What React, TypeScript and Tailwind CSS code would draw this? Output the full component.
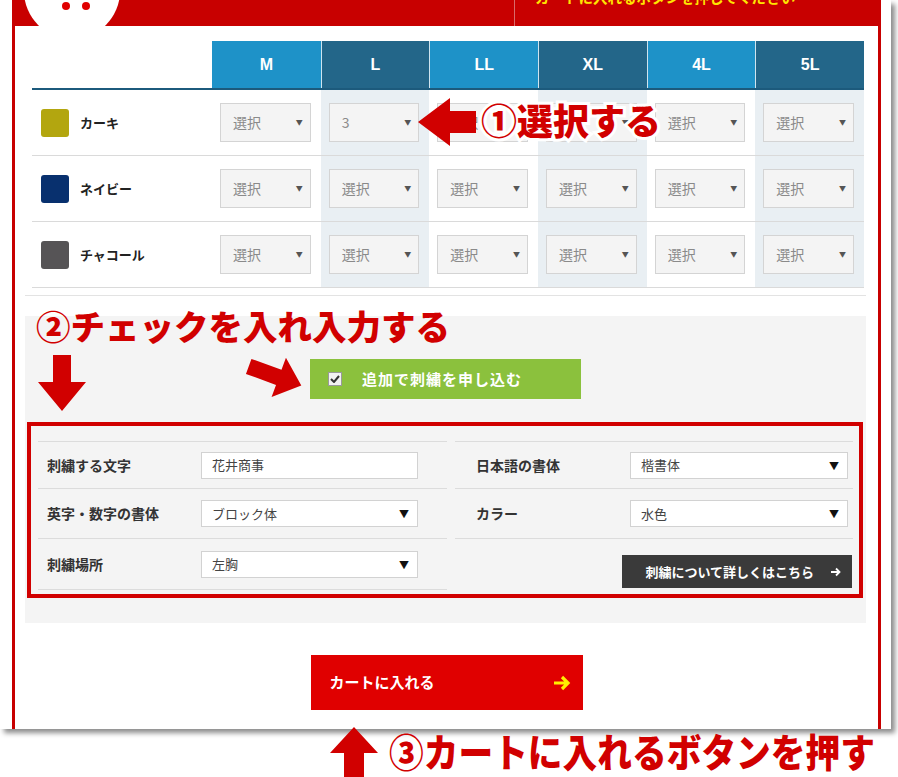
const sizes = [
  { label: 'M', dark: false },
  { label: 'L', dark: true },
  { label: 'LL', dark: false },
  { label: 'XL', dark: true },
  { label: '4L', dark: false },
  { label: '5L', dark: true },
];

const colors = [
  { name: 'カーキ', swatch: 'bg-[#b3a60f]', values: ['選択', '3', '選択', '選択', '選択', '選択'] },
  { name: 'ネイビー', swatch: 'bg-[#08306e]', values: ['選択', '選択', '選択', '選択', '選択', '選択'] },
  { name: 'チャコール', swatch: 'bg-[#565456]', values: ['選択', '選択', '選択', '選択', '選択', '選択'] },
];

const leftRows = [
  { label: '刺繍する文字', value: '花井商事', select: false, h: 'h-[47px]' },
  { label: '英字・数字の書体', value: 'ブロック体', select: true, h: 'h-[50px]' },
  { label: '刺繍場所', value: '左胸', select: true, h: 'h-[51px]' },
];

const rightRows = [
  { label: '日本語の書体', value: '楷書体', h: 'h-[47px]' },
  { label: 'カラー', value: '水色', h: 'h-[50px]' },
];

const SizeSelect = ({ value }: { value: string }) => (
  <div className="flex-1 h-[39px] border border-[#d4d4d4] bg-[#f4f4f4] flex items-center justify-between pl-[12px] pr-[7px] text-[14px] text-[#8a8a8a]">
    <span>{value}</span>
    <span className="text-[7px] text-[#555]">▼</span>
  </div>
);

const FormField = ({ value, select, w }: { value: string; select: boolean; w: string }) => (
  <div className={`${w} h-[27px] bg-white border border-[#d2d2d2] flex items-center justify-between pl-[10px] pr-[8px] text-[13px] text-[#444]`}>
    <span>{value}</span>
    {select && <span className="text-[10px] text-[#111]">▼</span>}
  </div>
);

export default function App() {
  return (
    <div className="relative w-[898px] h-[777px] overflow-hidden bg-white font-['Noto_Sans_CJK_JP',sans-serif]">
      {/* screenshot frame */}
      <div className="w-[891px] h-[729px] bg-white pl-[12px] pr-[10px] shadow-[4px_4px_5px_rgba(0,0,0,0.45)]">
        <div className="h-full border-x-[3px] border-[#c80000] flex flex-col">
          {/* top band */}
          <div className="h-[26px] shrink-0 bg-[#c80000] flex overflow-hidden">
            <div className="ml-[9px] mt-[-57px] w-[96px] h-[96px] shrink-0 rounded-full bg-white flex justify-center items-start pt-[59px] pl-[8px] gap-[12px]">
              <span className="w-[8px] h-[8px] rounded-full bg-[#e00000]" />
              <span className="w-[8px] h-[8px] rounded-full bg-[#e00000]" />
            </div>
            <div className="flex-1" />
            <div className="w-[364px] border-l border-[#d96a6a] pl-[20px]">
              <div className="mt-[-11px] text-[14.5px] leading-[15px] font-bold text-[#ffe500] whitespace-nowrap">
                カートに入れるボタンを押してください
              </div>
            </div>
          </div>

          {/* size table */}
          <div className="mt-[15px] ml-[17px] w-[832px]">
            <div className="grid grid-cols-[180px_repeat(6,1fr)] h-[47px]">
              <div />
              {sizes.map((s, i) => (
                <div
                  key={s.label}
                  className={`flex items-center justify-center text-white text-[16px] font-bold font-['Liberation_Sans',sans-serif] ${s.dark ? 'bg-[#236689]' : 'bg-[#1e92c8]'} ${i > 0 ? 'border-l border-[#cfe4ef]' : ''}`}
                >
                  {s.label}
                </div>
              ))}
            </div>
            <div className="h-[2px] bg-[#1c5a7c]" />
            {colors.map((c) => (
              <div key={c.name} className="grid grid-cols-[180px_repeat(6,1fr)] h-[66px] border-b border-[#dadada]">
                <div className="flex items-center pl-[9px] gap-[11px]">
                  <span className={`w-[28px] h-[28px] rounded-[3px] ${c.swatch}`} />
                  <span className="text-[13px] font-bold text-[#222]">{c.name}</span>
                </div>
                {c.values.map((v, i) => (
                  <div key={i} className={`flex items-center pl-[8px] pr-[10px] ${sizes[i].dark ? 'bg-[#e9eff3]' : ''}`}>
                    <SizeSelect value={v} />
                  </div>
                ))}
              </div>
            ))}
          </div>
          <div className="mt-[7px] ml-[10px] w-[841px] h-px bg-[#e3e3e3]" />

          {/* embroidery section */}
          <div className="mt-[20px] ml-[10px] w-[841px] h-[307px] bg-[#f4f4f4] flex flex-col items-center">
            <div className="mt-[43px] w-[271px] h-[40px] bg-[#8bc13d] flex items-center pl-[18px] gap-[20px]">
              <span className="w-[14px] h-[14px] bg-[#f2f2f2] border border-[#9a9a9a] flex items-center justify-center">
                <svg width="10" height="8" viewBox="0 0 10 8">
                  <path d="M1 4 L4 7 L9 1" fill="none" stroke="#333" strokeWidth="2" />
                </svg>
              </span>
              <span className="text-[15px] font-bold text-white tracking-[1px]">追加で刺繍を申し込む</span>
            </div>

            <div className="mt-[42px] self-start ml-[13px] w-[815px] flex gap-[8px]">
              <div className="w-[409px] border-t border-[#dcdcdc]">
                {leftRows.map((r) => (
                  <div key={r.label} className={`flex items-center border-b border-[#dcdcdc] ${r.h}`}>
                    <div className="w-[163px] pl-[9px] text-[14px] font-bold text-[#333]">{r.label}</div>
                    <FormField value={r.value} select={r.select} w="w-[217px]" />
                  </div>
                ))}
              </div>
              <div className="w-[398px] border-t border-[#dcdcdc]">
                {rightRows.map((r) => (
                  <div key={r.label} className={`flex items-center border-b border-[#dcdcdc] ${r.h}`}>
                    <div className="w-[175px] pl-[21px] text-[14px] font-bold text-[#333]">{r.label}</div>
                    <FormField value={r.value} select w="w-[218px]" />
                  </div>
                ))}
                <div className="h-[51px] flex justify-end items-end pb-[2px] pr-[1px]">
                  <div className="w-[230px] h-[33px] bg-[#3a3a3a] flex items-center justify-end pr-[11px] gap-[17px] text-white text-[13px] font-bold">
                    <span>刺繍について詳しくはこちら</span>
                    <svg width="10" height="10" viewBox="0 0 10 10">
                      <path d="M0 5 H8.5 M5 1.5 L8.5 5 L5 8.5" fill="none" stroke="#fff" strokeWidth="1.8" />
                    </svg>
                  </div>
                </div>
              </div>
            </div>
          </div>

          {/* cart button */}
          <div className="mt-[32px] self-center w-[272px] h-[55px] bg-[#e00000] flex items-center justify-between pl-[19px] pr-[12px]">
            <span className="text-[15px] font-bold text-white">カートに入れる</span>
            <svg width="18" height="18" viewBox="0 0 18 18">
              <path d="M1 9 H15 M9 3 L15 9 L9 15" fill="none" stroke="#ffee00" strokeWidth="3.2" />
            </svg>
          </div>
        </div>
      </div>

      {/* annotation ① */}
      <svg className="absolute left-[418px] top-[98px]" width="58" height="48" viewBox="0 0 58 48">
        <polygon points="0,24 32,0 32,13 58,13 58,35 32,35 32,48" fill="#d10000" />
      </svg>
      <div className="absolute left-[481px] top-[101px] text-[36px] leading-none font-black text-[#d10000] whitespace-nowrap [-webkit-text-stroke:6px_white] [paint-order:stroke_fill]">
        ①選択する
      </div>

      {/* annotation ② */}
      <div className="absolute left-[36px] top-[308px] text-[34.5px] leading-none font-black text-[#d10000] whitespace-nowrap">
        ②チェックを入れ入力する
      </div>
      <svg className="absolute left-[38px] top-[355px]" width="48" height="56" viewBox="0 0 48 56">
        <polygon points="15,0 33,0 33,27 48,27 24,56 0,27 15,27" fill="#d10000" />
      </svg>
      <svg className="absolute left-[245px] top-[350px]" width="60" height="52" viewBox="-30 -26 60 52">
        <g transform="rotate(20)">
          <polygon points="-28,-8 4,-8 4,-21 28,0 4,21 4,8 -28,8" fill="#d10000" />
        </g>
      </svg>
      <div className="absolute left-[27px] top-[422px] w-[836px] h-[176px] border-[4px] border-[#d10000]" />

      {/* annotation ③ */}
      <svg className="absolute left-[330px] top-[727px]" width="48" height="50" viewBox="0 0 48 50">
        <polygon points="24,0 48,26 34,26 34,50 14,50 14,26 0,26" fill="#d10000" />
      </svg>
      <div className="absolute left-[389px] top-[731px] text-[39px] leading-none font-black text-[#d10000] whitespace-nowrap origin-left scale-x-[0.89]">
        ③カートに入れるボタンを押す
      </div>
    </div>
  );
}
